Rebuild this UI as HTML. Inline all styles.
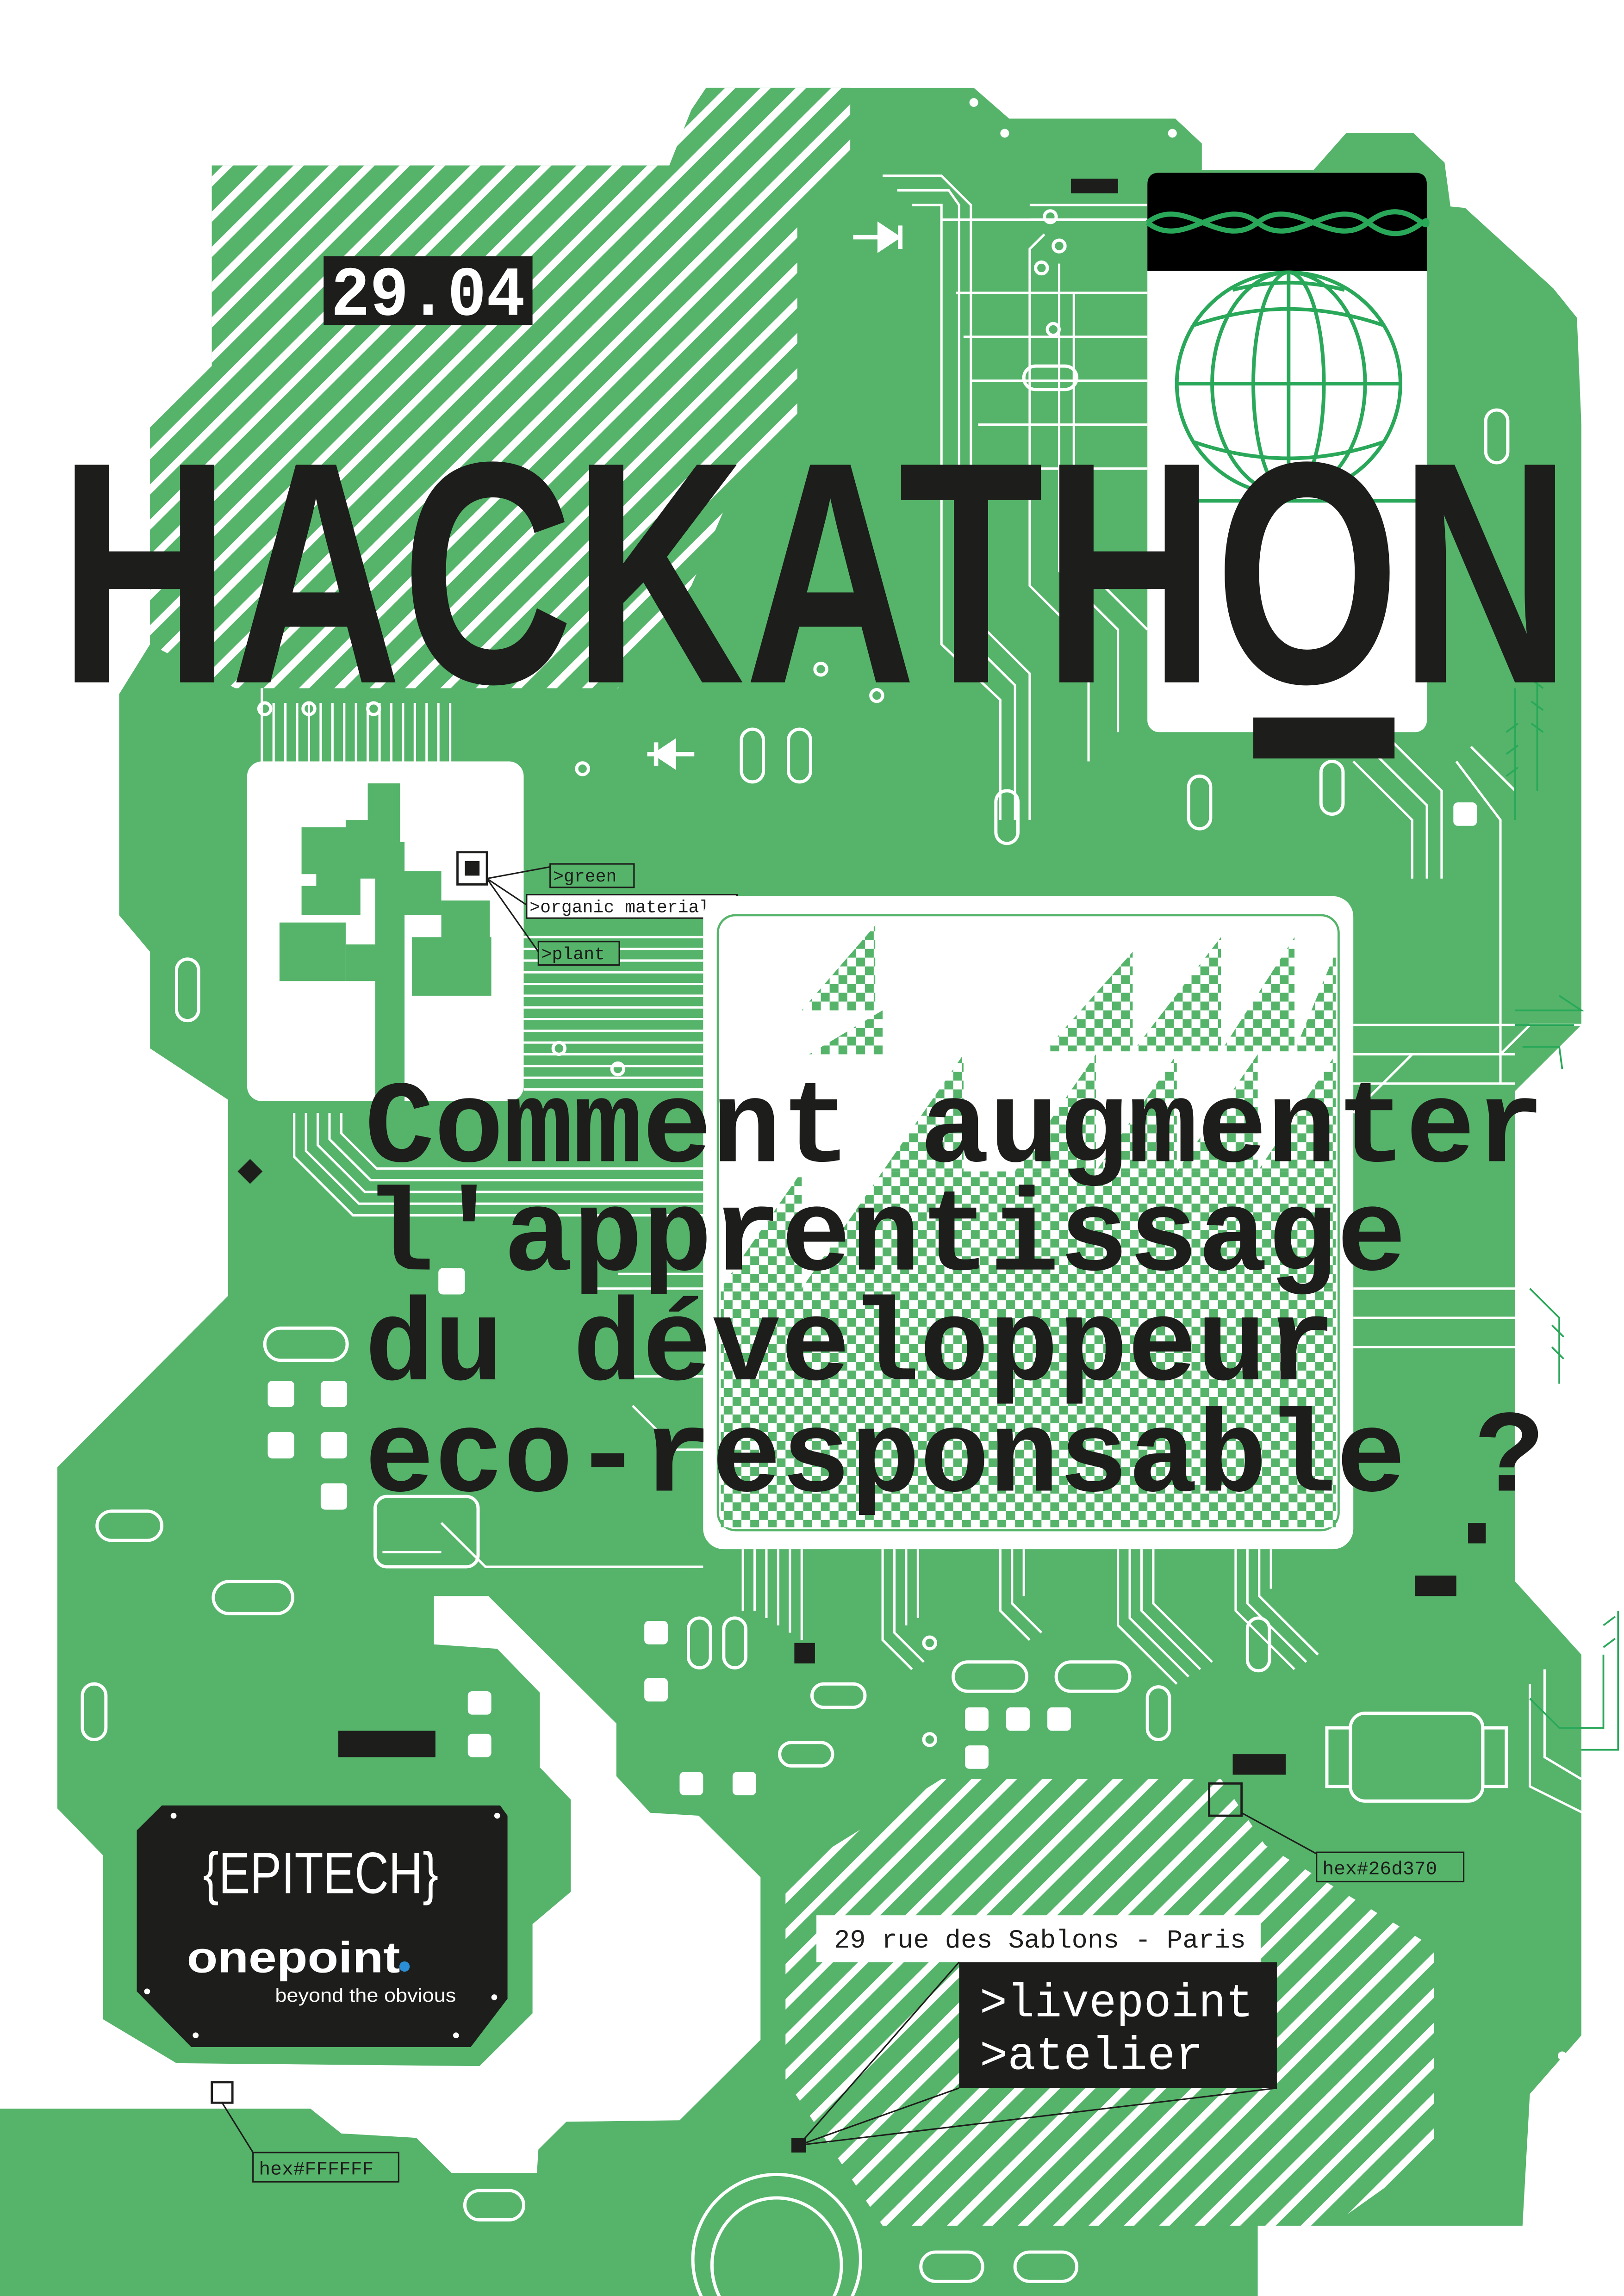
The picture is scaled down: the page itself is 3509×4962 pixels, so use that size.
<!DOCTYPE html>
<html><head><meta charset="utf-8"><style>
html,body{margin:0;padding:0;background:#fff;}
svg{display:block;}
text{font-family:"Liberation Mono",monospace;}
</style></head><body>
<svg width="3509" height="4962" viewBox="0 0 1104 1568" preserveAspectRatio="none" xmlns="http://www.w3.org/2000/svg">
<defs>
<pattern id="st" patternUnits="userSpaceOnUse" width="17" height="17" patternTransform="rotate(45)">
<rect width="17" height="17" fill="#55b46a"/><rect x="0" width="5" height="17" fill="#fff"/>
</pattern>
<pattern id="ck" patternUnits="userSpaceOnUse" width="12" height="12">
<rect width="12" height="12" fill="#fff"/><rect width="6" height="6" fill="#55b46a"/><rect x="6" y="6" width="6" height="6" fill="#55b46a"/>
</pattern>
</defs>
<rect width="1104" height="1568" fill="#fff"/>
<!-- board -->
<path fill="#55b46a" d="M144,113 L455,113 L470,75 L480,60 L662,60 L686,81 L799,81 L817,98 L817,116 L893,116 L915,91 L961,91 L982,111 L986,141 L996,142 L1056,197 L1072,217 L1075,290 L1075,700 L1030,745 L1030,1080 L1075,1130 L1075,1390 L1040,1430 L1035,1520 L855,1520 L855,1568 L0,1568 L0,1440 L211,1440 L232,1457 L283,1460 L307,1484 L365,1484 L366,1468 L385,1449 L462,1448 L517,1393 L517,1282 L475,1240 L442,1238 L419,1213 L419,1177 L332,1090 L295,1090 L295,1123 L338,1126 L367,1156 L367,1207 L388,1229 L388,1292 L362,1314 L362,1375 L326,1411 L120,1409 L70,1379 L70,1267 L39,1235 L39,1002 L155,885 L155,751 L102,716 L102,650 L81,625 L81,474 L102,440 L102,292 L144,250 Z"/>
<!-- stripes top-left -->
<path fill="url(#st)" d="M144,113 L455,113 L470,75 L480,60 L578,60 L578,106 L542,150 L542,292 L500,330 L470,400 L420,470 L160,470 L102,440 L102,292 L144,250 Z"/>
<!-- stripes bottom-right -->
<path fill="url(#st)" d="M534,1290 L560,1265 L640,1215 L830,1215 L860,1260 L975,1330 L975,1470 L905,1520 L600,1520 L534,1420 Z"/>
<!-- traces -->
<g stroke="#fff" stroke-width="1.6" fill="none">
<path d="M356,640 H478 M356,648 H478 M356,656 H478 M356,664 H478 M356,672 H478 M356,680 H478 M356,688 H478 M356,696 H478 M356,704 H478 M356,712 H478 M356,720 H478 M356,728 H478 M356,736 H478 M356,744 H478"/>
<path d="M200,760 L200,790 L240,830 H478 M208,760 L208,786 L244,822 H478 M216,760 L216,782 L248,814 H478 M224,760 L224,778 L252,806 H478 M232,760 L232,774 L256,798 H478"/>
<path d="M178,470 V520 M186,480 V520 M194,480 V520 M202,480 V520 M210,480 V520 M218,480 V520 M226,480 V520 M234,480 V520 M242,480 V520 M250,480 V520 M258,480 V520 M266,480 V520 M274,480 V520 M282,480 V520 M290,480 V520 M298,480 V520 M306,480 V520"/>
<path d="M505,1058 V1100 M513,1058 V1100 M521,1058 V1105 M529,1058 V1110 M537,1058 V1115 M545,1058 V1120 M600,1058 V1120 L620,1140 M608,1058 V1115 L628,1135 M616,1058 V1110 M624,1058 V1105 M680,1058 V1100 L700,1120 M688,1058 V1095 L708,1115 M696,1058 V1090 M760,1058 V1110 L800,1150 M768,1058 V1105 L808,1145 M776,1058 V1100 L816,1140 M784,1058 V1095 L824,1135 M840,1058 V1100 L880,1140 M848,1058 V1095 L888,1135 M856,1058 V1090 L896,1130 M864,1058 V1085"/>
<path d="M600,120 L640,120 L660,140 V420 L700,460 V560 M610,130 L645,130 L652,140 V430 L690,468 V560 M620,140 L640,140 V440 L680,478 V560 M700,140 H780 M700,150 H780 M710,160 L700,170 V400 L740,440 V520 M720,180 V390 L760,430 V500 M730,200 V380 L780,430"/>
<path d="M640,150 H780 M650,200 H780 M655,230 H780 M660,260 H780 M665,290 H780 M670,320 H780"/>
<path d="M920,520 L960,560 V600 M930,510 L970,550 V600 M940,500 L980,540 V600 M990,520 L1020,560 V740 M1000,510 L1030,540"/>
<path d="M920,700 H1030 M920,720 H1030 M920,740 H1030 M920,880 H1040 L1060,900 M920,900 H1040 M920,920 H1030 M920,760 L960,720 H1020 L1040,700 H1075"/>
<path d="M420,870 H478 M400,880 H478 M430,940 H478 M430,960 L460,990 H478 M300,1040 L330,1070 H478 M260,1060 H300"/>
<path d="M1040,1150 V1220 L1080,1240 M1050,1140 V1200 L1075,1215"/>
</g>
<g stroke="#fff" stroke-width="2.2" fill="none">
<rect x="504" y="498" width="15" height="36" rx="7.5"/><rect x="536" y="498" width="15" height="36" rx="7.5"/>
<rect x="696" y="250" width="36" height="16" rx="8"/><rect x="677" y="540" width="15" height="36" rx="7.5"/>
<rect x="808" y="530" width="15" height="36" rx="7.5"/><rect x="898" y="520" width="15" height="36" rx="7.5"/>
<rect x="1010" y="280" width="15" height="36" rx="7.5"/><rect x="120" y="655" width="15" height="42" rx="7.5"/>
<rect x="180" y="907" width="56" height="22" rx="11"/><rect x="66" y="1032" width="44" height="20" rx="10"/>
<rect x="145" y="1080" width="54" height="22" rx="11"/><rect x="56" y="1150" width="16" height="38" rx="8"/>
<rect x="255" y="1022" width="70" height="48" rx="8"/><rect x="468" y="1105" width="15" height="34" rx="7.5"/>
<rect x="492" y="1105" width="15" height="34" rx="7.5"/><rect x="552" y="1150" width="36" height="16" rx="8"/>
<rect x="648" y="1135" width="50" height="20" rx="10"/><rect x="718" y="1135" width="50" height="20" rx="10"/>
<rect x="530" y="1190" width="36" height="16" rx="8"/><rect x="780" y="1152" width="15" height="36" rx="7.5"/>
<rect x="848" y="1105" width="15" height="36" rx="7.5"/><rect x="918" y="1170" width="90" height="60" rx="10"/>
<rect x="902" y="1180" width="16" height="40"/><rect x="1008" y="1180" width="16" height="40"/>
<rect x="316" y="1496" width="40" height="20" rx="10"/><rect x="626" y="1538" width="42" height="20" rx="10"/>
<rect x="690" y="1538" width="42" height="20" rx="10"/>
<ellipse cx="528" cy="1543" rx="57" ry="58"/><ellipse cx="528" cy="1547" rx="44" ry="46"/>
<circle cx="180" cy="484" r="4"/><circle cx="210" cy="484" r="4"/><circle cx="254" cy="484" r="4"/>
<circle cx="714" cy="148" r="4"/><circle cx="720" cy="168" r="4"/><circle cx="708" cy="183" r="4"/><circle cx="716" cy="225" r="4"/>
<circle cx="396" cy="525" r="4"/><circle cx="558" cy="457" r="4"/><circle cx="596" cy="475" r="4"/>
<circle cx="632" cy="1122" r="4"/><circle cx="632" cy="1188" r="4"/><circle cx="380" cy="716" r="4"/><circle cx="420" cy="730" r="4"/>
</g>
<g fill="#fff">
<rect x="182" y="943" width="18" height="18" rx="3"/><rect x="218" y="943" width="18" height="18" rx="3"/>
<rect x="182" y="978" width="18" height="18" rx="3"/><rect x="218" y="978" width="18" height="18" rx="3"/>
<rect x="218" y="1013" width="18" height="18" rx="3"/><rect x="298" y="866" width="18" height="18" rx="3"/>
<rect x="318" y="1155" width="16" height="16" rx="3"/><rect x="318" y="1184" width="16" height="16" rx="3"/>
<rect x="438" y="1107" width="16" height="16" rx="3"/><rect x="438" y="1146" width="16" height="16" rx="3"/>
<rect x="462" y="1210" width="16" height="16" rx="3"/><rect x="498" y="1210" width="16" height="16" rx="3"/>
<rect x="656" y="1166" width="16" height="16" rx="3"/><rect x="684" y="1166" width="16" height="16" rx="3"/>
<rect x="712" y="1166" width="16" height="16" rx="3"/><rect x="656" y="1192" width="16" height="16" rx="3"/>
<rect x="988" y="548" width="16" height="16" rx="3"/>
<circle cx="662" cy="70" r="3"/><circle cx="683" cy="91" r="3"/><circle cx="797" cy="91" r="3"/>
<circle cx="1062" cy="1404" r="3"/><circle cx="1062" cy="1416" r="3"/><circle cx="1062" cy="1432" r="3"/>
<path d="M580,162 H612 M598,154 L610,162 L598,170 Z M612,154 V170" stroke="#fff" stroke-width="3"/>
<path d="M440,515 H472 M458,507 L446,515 L458,523 Z M446,507 V523" stroke="#fff" stroke-width="3"/>
</g>
<g stroke="#2aa85a" stroke-width="1.2" fill="none">
<path d="M1030,470 V560 M1045,460 V540 M1024,500 l8,-6 M1024,515 l8,-6 M1024,530 l8,-6 M1049,470 l-8,-6 M1049,485 l-8,-6 M1049,500 l-8,-6"/>
<path d="M1030,690 H1075 L1060,680 M1030,700 H1070 M1035,715 H1060 L1062,730"/>
<path d="M1040,880 L1060,900 V945 M1055,905 l8,8 M1055,920 l8,8"/>
<path d="M1040,1160 L1060,1180 H1090 V1130 M1075,1195 H1100 V1100 M1090,1110 l8,-6 M1090,1125 l8,-6"/>
</g>
<!-- black rectangle top right & white card -->
<rect x="780" y="118" width="190" height="382" rx="8" fill="#fff"/>
<path d="M788,118 H962 Q970,118 970,126 V185 H780 V126 Q780,118 788,118 Z" fill="#000"/>
<path d="M780,152 C805,132 830,172 855,152 C880,132 905,172 930,152 C955,132 970,160 970,152 M780,152 C805,172 830,132 855,152 C880,172 905,132 930,152 C955,172 970,145 970,152" stroke="#2aa85a" stroke-width="3.5" fill="none"/>
<g stroke="#2aa85a" stroke-width="2.5" fill="none">
<circle cx="876" cy="262" r="76"/>
<ellipse cx="876" cy="262" rx="52" ry="76"/><ellipse cx="876" cy="262" rx="24" ry="76"/><path d="M876,186 V338"/>
<path d="M800,262 H952 M812,222 Q876,200 940,222 M812,302 Q876,324 940,302 M838,198 Q876,188 914,198"/>
<path d="M800,342 H970"/>
</g>
<rect x="728" y="122" width="32" height="10" fill="#1d1d1b"/>
<rect x="852" y="490" width="96" height="28" fill="#1d1d1b"/>
<!-- date -->
<rect x="220" y="175" width="142" height="47" fill="#1d1d1b"/>
<text x="291" y="215" font-size="48" font-weight="bold" fill="#fff" text-anchor="middle" textLength="132" lengthAdjust="spacingAndGlyphs">29.04</text>
<!-- HACKATHON -->
<text x="40" y="466" font-size="216" font-weight="bold" fill="#1d1d1b" textLength="1028" lengthAdjust="spacingAndGlyphs" style="font-family:'Liberation Sans Narrow','Liberation Sans',sans-serif">HACKATHON</text>
<!-- plant card -->
<rect x="168" y="520" width="188" height="232" rx="10" fill="#fff"/>
<g fill="#55b46a">
<rect x="250" y="535" width="22" height="40"/><rect x="235" y="560" width="30" height="40"/>
<rect x="205" y="565" width="32" height="32"/><rect x="215" y="595" width="30" height="30"/>
<rect x="255" y="575" width="20" height="180"/><rect x="270" y="595" width="30" height="30"/>
<rect x="190" y="630" width="45" height="40"/><rect x="235" y="645" width="22" height="25"/>
<rect x="280" y="640" width="54" height="40"/><rect x="300" y="615" width="33" height="30"/>
<rect x="205" y="605" width="30" height="20"/>
</g>
<rect x="311" y="582" width="20" height="22" fill="none" stroke="#1d1d1b" stroke-width="1.5"/>
<rect x="316" y="588" width="10" height="10" fill="#1d1d1b"/>
<g stroke="#1d1d1b" stroke-width="1" fill="none"><path d="M331,600 L374,592 M331,600 L358,618 M331,600 L366,650"/></g>
<g font-size="12" fill="#1d1d1b">
<rect x="374" y="590" width="57" height="16" fill="#55b46a" stroke="#1d1d1b"/><text x="376" y="602">&gt;green</text>
<rect x="358" y="611" width="143" height="16" fill="#fff" stroke="#1d1d1b"/><text x="360" y="623">&gt;organic material</text>
<rect x="366" y="643" width="55" height="16" fill="#55b46a" stroke="#1d1d1b"/><text x="368" y="655">&gt;plant</text>
</g>
<!-- question panel -->
<rect x="478" y="612" width="442" height="446" rx="14" fill="#fff"/>
<rect x="488" y="625" width="422" height="420" rx="12" fill="none" stroke="#55b46a" stroke-width="1.5"/>
<g fill="url(#ck)">
<path d="M545,690 L595,632 V690 Z M710,718 L770,650 V718 Z M770,718 L830,640 V718 Z M830,718 L880,640 V718 Z M880,718 L908,650 V718 Z"/>
<path d="M550,720 L600,690 V720 Z M600,800 L655,720 V800 Z M690,800 L745,720 V800 Z M745,800 L800,720 V800 Z M800,800 L855,720 V800 Z M855,800 L908,720 V800 Z"/>
<path d="M490,880 L545,800 V880 Z M545,880 L600,800 V880 Z M600,880 H908 V800 H600 Z"/>
<path d="M490,880 H908 V1043 H490 Z"/>
</g>
<!-- question text -->
<g font-size="80" font-weight="bold" fill="#1d1d1b">
<text x="248" y="793" textLength="802" lengthAdjust="spacingAndGlyphs">Comment augmenter</text>
<text x="248" y="867" textLength="708" lengthAdjust="spacingAndGlyphs">l'apprentissage</text>
<text x="248" y="942" textLength="660" lengthAdjust="spacingAndGlyphs">du développeur</text>
<text x="248" y="1018" textLength="802" lengthAdjust="spacingAndGlyphs">eco-responsable ?</text>
</g>
<rect x="164" y="794" width="12" height="12" fill="#1d1d1b" transform="rotate(45 170 800)"/>
<g fill="#1d1d1b">
<rect x="998" y="1040" width="12" height="14"/><rect x="962" y="1076" width="28" height="14"/>
<rect x="540" y="1122" width="14" height="14"/><rect x="230" y="1182" width="66" height="18"/>
<rect x="838" y="1198" width="36" height="14"/><rect x="538" y="1460" width="10" height="10"/>
</g>
<!-- chip -->
<path d="M110,1233 H340 L345,1240 V1365 L320,1398 H130 L93,1360 V1250 Z" fill="#1d1d1b"/>
<g fill="#fff"><circle cx="118" cy="1240" r="2"/><circle cx="338" cy="1240" r="2"/><circle cx="100" cy="1360" r="2"/><circle cx="336" cy="1364" r="2"/><circle cx="133" cy="1390" r="2"/><circle cx="310" cy="1390" r="2"/></g>
<text x="218" y="1293" font-size="40" fill="#fff" text-anchor="middle" style="font-family:'Liberation Sans Narrow','Liberation Sans',sans-serif" textLength="160" lengthAdjust="spacingAndGlyphs">{EPITECH}</text>
<text x="127" y="1347" font-size="30" font-weight="bold" fill="#fff" style="font-family:'Liberation Sans',sans-serif" textLength="145" lengthAdjust="spacingAndGlyphs">onepoint</text>
<circle cx="275" cy="1343" r="3.5" fill="#2a8fd6"/>
<text x="187" y="1367" font-size="13" fill="#fff" style="font-family:'Liberation Sans',sans-serif" textLength="123" lengthAdjust="spacingAndGlyphs">beyond the obvious</text>
<!-- address -->
<rect x="555" y="1308" width="302" height="32" fill="#fff"/>
<text x="567" y="1330" font-size="18" fill="#1d1d1b" textLength="280" lengthAdjust="spacingAndGlyphs">29 rue des Sablons - Paris</text>
<rect x="652" y="1340" width="216" height="86" fill="#1d1d1b"/>
<text x="666" y="1377" font-size="32" fill="#fff" textLength="186" lengthAdjust="spacingAndGlyphs">&gt;livepoint</text>
<text x="666" y="1413" font-size="32" fill="#fff" textLength="152" lengthAdjust="spacingAndGlyphs">&gt;atelier</text>
<g stroke="#1d1d1b" stroke-width="1" fill="none"><path d="M543,1465 L652,1340 M543,1465 L652,1426 M543,1465 L868,1426"/></g>
<!-- hex labels -->
<rect x="822" y="1218" width="22" height="22" fill="none" stroke="#1d1d1b" stroke-width="1.5"/>
<path d="M844,1238 L895,1266" stroke="#1d1d1b" fill="none"/>
<rect x="895" y="1265" width="100" height="20" fill="#55b46a" stroke="#1d1d1b"/>
<text x="899" y="1280" font-size="13" fill="#1d1d1b">hex#26d370</text>
<rect x="144" y="1422" width="14" height="14" fill="#fff" stroke="#1d1d1b" stroke-width="1.5"/>
<path d="M151,1436 L172,1470" stroke="#1d1d1b" fill="none"/>
<rect x="172" y="1470" width="99" height="20" fill="#55b46a" stroke="#1d1d1b"/>
<text x="176" y="1485" font-size="13" fill="#1d1d1b">hex#FFFFFF</text>
</svg>
</body></html>
